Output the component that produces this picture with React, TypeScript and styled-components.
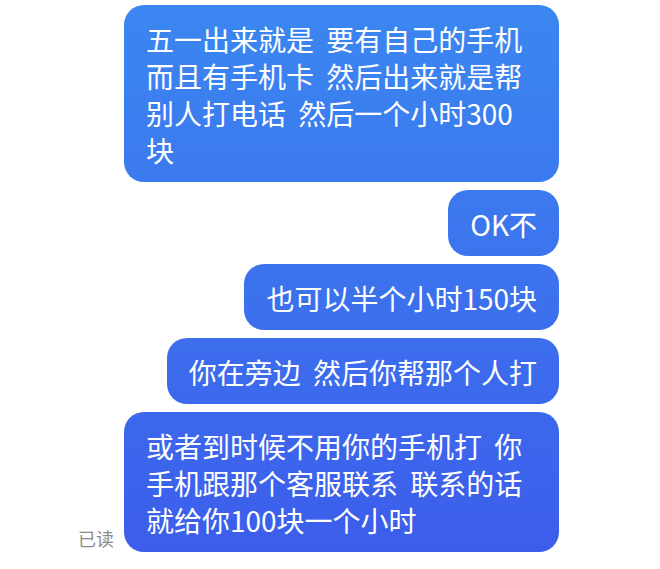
import styled, { createGlobalStyle } from "styled-components";

const GlobalStyle = createGlobalStyle`
    html, body {
        margin: 0;
        padding: 0;
        background: #ffffff;
    }
    body {
        font-family: "Noto Sans CJK SC", "Noto Sans", sans-serif;
    }
`;

const Page = styled.div`
    width: 660px;
    height: 569px;
    box-sizing: border-box;
    padding: 5px 101px 0 0;
    display: flex;
    flex-direction: column;
    align-items: flex-end;
    gap: 8px;
    overflow: hidden;
`;

const Row = styled.div`
    display: flex;
    align-items: flex-end;
    gap: 10px;
`;

const Bubble = styled.div`
    max-width: 435px;
    box-sizing: border-box;
    padding: 16px 22px 13px;
    border-radius: 20px;
    background: linear-gradient(180deg, #3b87f0 0%, #3c74ee 45%, #3c5ceb 100%);
    background-attachment: fixed;
    color: #ffffff;
    font-size: 28px;
    line-height: 37px;
    word-spacing: 6px;
    word-break: break-all;
`;

const ReadMark = styled.span`
    font-size: 18px;
    line-height: 20px;
    color: #8a8a8a;
    margin-bottom: 4px;
`;

const messages = [
    "五一出来就是 要有自己的手机而且有手机卡 然后出来就是帮别人打电话 然后一个小时300块",
    "OK不",
    "也可以半个小时150块",
    "你在旁边 然后你帮那个人打",
];

const lastMessage = "或者到时候不用你的手机打 你手机跟那个客服联系 联系的话就给你100块一个小时";

function App() {
    return (
        <>
            <GlobalStyle />
            <Page>
                {messages.map((text) => (
                    <Bubble key={text}>{text}</Bubble>
                ))}
                <Row>
                    <ReadMark>已读</ReadMark>
                    <Bubble>{lastMessage}</Bubble>
                </Row>
            </Page>
        </>
    );
}

export default App;
